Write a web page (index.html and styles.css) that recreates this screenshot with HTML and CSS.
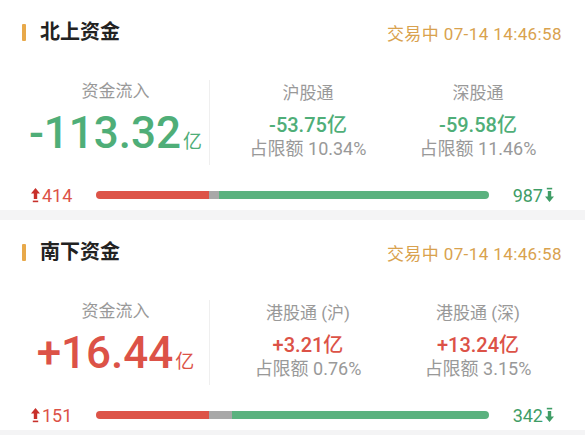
FILE: index.html
```html
<!DOCTYPE html>
<html lang="zh">
<head>
  <meta charset="UTF-8" />
  <title>沪深港通资金</title>
  <link rel="stylesheet" href="styles.css">
</head>
<body>

<div class="panel">
  <div class="panel-head">
    <h2 class="panel-title">北上资金</h2>
    <span class="panel-time">交易中 07-14 14:46:58</span>
  </div>
  <div class="stats">
    <div class="stat-main">
      <div class="stat-label">资金流入</div>
      <div class="stat-total down">-113.32<span class="unit">亿</span></div>
    </div>
    <div class="stat-subs">
      <div class="stat-sub">
        <div class="stat-label">沪股通</div>
        <div class="stat-value down">-53.75亿</div>
        <div class="stat-pct">占限额 10.34%</div>
      </div>
      <div class="stat-sub">
        <div class="stat-label">深股通</div>
        <div class="stat-value down">-59.58亿</div>
        <div class="stat-pct">占限额 11.46%</div>
      </div>
    </div>
  </div>
  <div class="breadth">
    <span class="breadth-up">
      <svg class="arrow" viewBox="0 0 9 16"><path d="M4.5 1 9 6.5H6.2V12H2.8V6.5H0Z"/><rect x="1.8" y="13.6" width="5.4" height="1.6"/></svg>414
    </span>
    <div class="bar">
      <i class="seg-up" style="width:28.8%"></i>
      <i class="seg-flat" style="width:2.5%"></i>
      <i class="seg-down" style="width:68.7%"></i>
    </div>
    <span class="breadth-down">
      987<svg class="arrow" viewBox="0 0 9 16"><rect x="1.8" y="0.8" width="5.4" height="1.6"/><path d="M4.5 15 9 9.5H6.2V4H2.8V9.5H0Z"/></svg>
    </span>
  </div>
</div>

<div class="panel">
  <div class="panel-head">
    <h2 class="panel-title">南下资金</h2>
    <span class="panel-time">交易中 07-14 14:46:58</span>
  </div>
  <div class="stats">
    <div class="stat-main">
      <div class="stat-label">资金流入</div>
      <div class="stat-total up">+16.44<span class="unit">亿</span></div>
    </div>
    <div class="stat-subs">
      <div class="stat-sub">
        <div class="stat-label">港股通 (沪)</div>
        <div class="stat-value up">+3.21亿</div>
        <div class="stat-pct">占限额 0.76%</div>
      </div>
      <div class="stat-sub">
        <div class="stat-label">港股通 (深)</div>
        <div class="stat-value up">+13.24亿</div>
        <div class="stat-pct">占限额 3.15%</div>
      </div>
    </div>
  </div>
  <div class="breadth">
    <span class="breadth-up">
      <svg class="arrow" viewBox="0 0 9 16"><path d="M4.5 1 9 6.5H6.2V12H2.8V6.5H0Z"/><rect x="1.8" y="13.6" width="5.4" height="1.6"/></svg>151
    </span>
    <div class="bar">
      <i class="seg-up" style="width:28.8%"></i>
      <i class="seg-flat" style="width:5.8%"></i>
      <i class="seg-down" style="width:65.4%"></i>
    </div>
    <span class="breadth-down">
      342<svg class="arrow" viewBox="0 0 9 16"><rect x="1.8" y="0.8" width="5.4" height="1.6"/><path d="M4.5 15 9 9.5H6.2V4H2.8V9.5H0Z"/></svg>
    </span>
  </div>
</div>

</body>
</html>
```

FILE: styles.css
```css
body {
  margin: 0;
  background: #f4f4f5;
  font-family: Roboto, "Noto Sans CJK SC", sans-serif;
}

.panel {
  background: white;
  height: 210px;
  margin-bottom: 10px;
}

.panel-head {
  display: flex;
  align-items: center;
  justify-content: space-between;
  padding: 20px 23px 0 22px;
  height: 24px;
}

.panel-title {
  margin: 0;
  font-size: 20px;
  line-height: 24px;
  font-weight: 700;
  color: #222;
  display: flex;
  align-items: center;
  gap: 14px;
}

.panel-title::before {
  content: "";
  width: 4px;
  height: 17px;
  border-radius: 1px;
  background: #e8a94a;
}

.panel-time {
  font-size: 17px;
  letter-spacing: 0.4px;
  color: #d9a24e;
}

.stats {
  display: flex;
  margin-top: 36px;
  padding: 0 22px;
}

.stat-main {
  width: 187px;
  border-right: 1px solid #efefef;
  padding-bottom: 7px;
  text-align: center;
}

.stat-subs {
  flex: 1;
  display: flex;
  padding-left: 13px;
}

.stat-sub {
  flex: 1;
  padding-top: 2px;
  text-align: center;
}

.stat-label {
  font-size: 17px;
  line-height: 22px;
  color: #999;
}

.stat-total {
  margin-top: 6px;
  font-size: 44px;
  line-height: 50px;
  height: 50px;
  font-weight: 500;
}

.stat-total .unit {
  font-size: 19px;
  line-height: 1;
  font-weight: 400;
  margin-left: 2px;
}

.stat-value {
  margin-top: 10px;
  font-size: 20px;
  line-height: 22px;
  font-weight: 500;
}

.stat-pct {
  margin-top: 2px;
  font-size: 18px;
  line-height: 22px;
  color: #999;
}

.up {
  color: #dc5247;
}

.down {
  color: #4fae78;
}

.breadth {
  display: flex;
  align-items: center;
  gap: 24px;
  margin-top: 22px;
  padding: 0 31px;
  height: 16px;
  font-size: 18px;
}

.breadth-up, .breadth-down {
  width: 41px;
  display: flex;
  align-items: center;
  gap: 2px;
}

.breadth-up {
  color: #dc5247;
}

.breadth-up .arrow {
  fill: #c8302b;
}

.breadth-down {
  color: #3f9d66;
  justify-content: flex-end;
}

.breadth-down .arrow {
  fill: #3f9d66;
}

.arrow {
  width: 9px;
  height: 16px;
  flex: none;
}

.bar {
  flex: 1;
  display: flex;
  height: 8px;
  border-radius: 4px;
  overflow: hidden;
}

.bar i {
  display: block;
}

.seg-up {
  background: #dd5448;
}

.seg-flat {
  background: #a8a8a8;
}

.seg-down {
  background: #5bb27f;
}
```
